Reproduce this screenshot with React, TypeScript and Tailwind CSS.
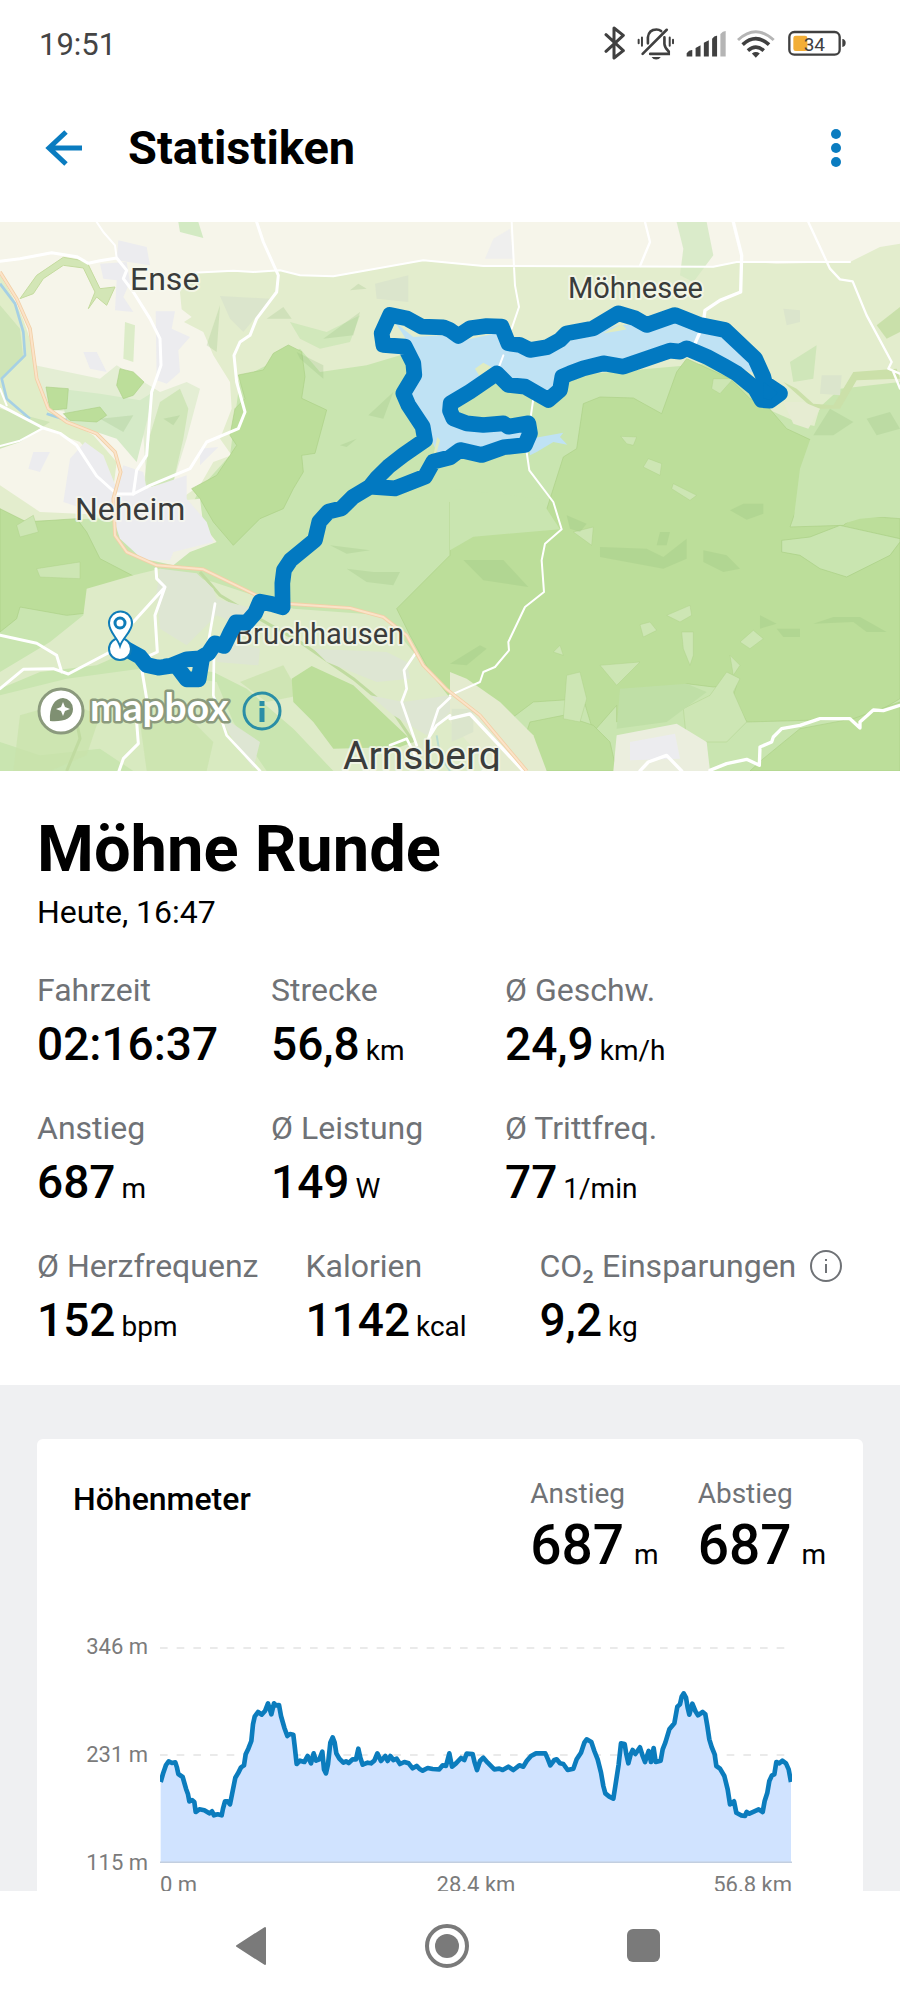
import type { ReactNode } from 'react';

type StatProps = {
  label: ReactNode;
  value: string;
  unit?: string;
};

// Elevation profile, 1896 x 648 units, 0 = 346 m, 648 = 115 m
const PROFILE =
  '2,405 10,377 18,354 26,343 36,348 46,346 51,362 55,381 68,390 78,425 84,442 88,463 96,459 103,465 107,495 118,487 133,490 148,499 156,493 162,505 173,502 185,505 189,485 195,463 203,463 210,472 216,442 226,392 234,379 243,361 252,355 257,322 265,305 274,282 279,232 284,209 294,195 305,203 315,192 324,169 334,202 342,169 348,175 357,174 363,207 373,242 382,267 390,261 400,263 404,297 410,351 420,341 433,345 443,327 453,349 461,319 468,341 478,337 487,314 492,367 498,379 504,352 511,287 518,271 524,287 529,319 538,335 550,347 558,343 566,348 578,337 588,337 595,305 601,332 608,353 623,347 633,349 643,341 652,319 663,342 676,327 683,342 691,327 700,339 710,335 720,351 733,345 746,349 758,364 770,357 778,365 788,371 803,363 818,366 838,367 848,355 858,357 868,319 876,359 888,349 903,333 913,339 920,320 938,321 944,347 951,369 960,342 970,332 983,347 1003,367 1018,365 1028,369 1045,359 1060,369 1078,355 1090,359 1100,342 1113,327 1128,319 1156,319 1164,337 1171,355 1183,339 1190,337 1200,349 1210,351 1223,369 1240,365 1250,337 1263,317 1273,287 1280,277 1294,285 1303,312 1313,337 1323,377 1330,417 1336,439 1348,449 1360,455 1366,417 1376,352 1383,289 1394,291 1399,322 1405,349 1412,322 1418,309 1426,321 1440,301 1448,327 1455,345 1466,312 1473,345 1481,303 1487,345 1502,341 1508,307 1516,287 1528,247 1543,229 1552,179 1560,172 1565,149 1571,139 1578,152 1583,182 1588,203 1597,170 1606,192 1614,205 1628,195 1636,202 1642,237 1648,277 1655,300 1664,322 1669,357 1680,365 1693,387 1703,427 1710,472 1722,463 1729,497 1743,505 1755,507 1760,495 1768,500 1783,493 1796,487 1808,495 1814,462 1822,437 1828,402 1836,385 1843,382 1849,345 1858,349 1867,341 1878,349 1886,367 1893,405';

const ROUTE =
  'M375 1279 420 1304 440 1329 475 1337 510 1332 560 1312 600 1309 625 1294 645 1264 672 1272 690 1234 708 1201 740 1202 765 1174 780 1139 815 1146 848 1156 847 1084 852 1044 872 1014 945 954 958 899 985 869 1025 859 1060 824 1110 794 1130 769 1165 734 1210 699 1275 654 1268 614 1225 549 1210 514 1243 459 1240 424 1215 374 1150 369 1145 334 1170 279 1220 289 1265 314 1330 316 1350 324 1375 342 1410 319 1460 312 1505 314 1525 364 1560 369 1590 384 1640 376 1680 354 1700 334 1780 319 1855 274 1905 289 1940 309 2025 279 2100 309 2175 324 2265 409 2290 464 2295 484 2340 514 2310 536 2285 534 2265 499 2210 454 2175 434 2120 404 2060 379 2040 389 2010 386 1870 434 1810 424 1750 439 1710 454 1687 464 1680 504 1645 534 1575 494 1525 489 1490 454 1410 509 1352 544 1350 566 1360 589 1400 604 1450 609 1510 604 1525 614 1585 604 1590 634 1575 669 1510 676 1445 699 1380 684 1350 706 1300 719 1275 764 1185 799 1110 794M500 1332 530 1332 560 1372 596 1372 606 1310';

function Stat({ label, value, unit }: StatProps) {
  return (
    <div className="min-w-[187px]">
      <dt className="flex items-center text-[32px] leading-10 text-[#6f7276] whitespace-nowrap">{label}</dt>
      <dd className="mt-2 flex items-baseline gap-1.5 text-[46px] leading-[52px] font-medium text-black">
        {value}
        {unit && <span className="text-[28px] leading-8 font-normal">{unit}</span>}
      </dd>
    </div>
  );
}

function Climb({ label, value }: { label: string; value: string }) {
  return (
    <div>
      <dt className="text-[28px] leading-9 text-[#6f7276]">{label}</dt>
      <dd className="flex items-baseline gap-2.5 text-[55px] leading-[66px] font-medium text-black">
        {value}
        <span className="text-[28px] leading-8 font-normal">m</span>
      </dd>
    </div>
  );
}

function StatusBar() {
  return (
    <div className="flex h-[90px] items-center justify-between pl-[39px] pr-[54px]">
      <span className="text-[31px] leading-9 text-[#444]">19:51</span>
      <div className="flex items-center gap-[11px] pb-1 text-[#404040]">
        <svg className="h-[34px] w-[22px]" viewBox="130 78 66 102" fill="none" stroke="currentColor" strokeWidth="9" strokeLinecap="round" strokeLinejoin="round">
          <path d="M136 104 188 152 160 174V84L188 106 136 154" />
        </svg>
        <svg className="h-[34px] w-[38px]" viewBox="230 78 115 102" fill="none" stroke="currentColor" strokeWidth="8" strokeLinecap="round">
          <path d="M247 162 320 89M263 130V112C265 94 277 88 289 88Q297 88 303 93M313 112V132Q314 144 326 155V162H270" />
          <path d="M245 112V137M235 119V130M329 112V137M339 119V130" strokeWidth="6" />
          <path d="M274 171H302Q297 179 288 179T274 171" fill="currentColor" stroke="none" />
        </svg>
        <svg className="h-[34px] w-10" viewBox="377 78 121 102" fill="currentColor">
          <path d="M379 170V160Q387 149 396 150V170ZM406 170V144L421 136V170ZM431 170V128L446 121V170ZM456 170V116Q463 106 471 107V170Z" />
          <path d="M481 170V102Q488 93 497 93V170Z" fill="#b5b5b5" />
        </svg>
        <svg className="h-[34px] w-[38px]" viewBox="530 78 115 102" fill="none" stroke="currentColor" strokeWidth="11">
          <path d="M533 120Q587 70 641 120" stroke="#b5b5b5" strokeWidth="9" />
          <path d="M547 134Q587 98 627 134M563 152Q587 131 611 152" />
          <path d="M575 161Q587 152 599 161L587 174Z" fill="currentColor" stroke="none" />
        </svg>
        <svg className="ml-0.5 h-[34px] w-[58px]" viewBox="682 78 174 102">
          <rect x="686" y="96" width="151" height="68" rx="15" fill="none" stroke="currentColor" strokeWidth="7" />
          <rect x="698" y="107" width="42" height="46" rx="7" fill="#f2ae36" />
          <path d="M845 117Q855 118 855 129T845 141Z" fill="currentColor" />
          <text x="761" y="152" textAnchor="middle" fontSize="57" fill="currentColor">34</text>
        </svg>
      </div>
    </div>
  );
}

function Header() {
  return (
    <header className="flex h-[132px] items-center pl-[37px] pr-[37px] pb-4">
      <button type="button" aria-label="Zurück" className="mr-[37px] flex size-[54px] items-center justify-center text-[#0a7cc0]">
        <svg className="h-9 w-[38px]" viewBox="0 0 38 36" fill="none" stroke="currentColor" strokeWidth="5">
          <path d="M37 18H4M21 2 4 18 21 34" />
        </svg>
      </button>
      <h1 className="text-[47px] leading-[54px] font-bold text-black">Statistiken</h1>
      <button type="button" aria-label="Mehr" className="ml-auto flex size-[54px] items-center justify-center text-[#0a7cc0]">
        <svg className="h-10 w-3" viewBox="0 0 12 40" fill="currentColor">
          <circle cx="6" cy="6" r="5" />
          <circle cx="6" cy="20" r="5" />
          <circle cx="6" cy="34" r="5" />
        </svg>
      </button>
    </header>
  );
}

function Terrain() {
  return (
    <g transform="scale(0.33333)" strokeLinejoin="round">
      <path d="M0 0H2700V1647H0Z" fill="#c9e5b0" />

      {/* open fields */}
      <path d="M0 0H2700V480L2560 520 2480 620 2390 600 2300 560 2180 420 1600 470 1340 440 1200 400 1100 430 960 450 900 380 800 430 720 470 690 700 600 800 560 880 0 900Z" fill="#e3edcd" />
      <path d="M0 0H2700V65L2640 75 2550 120 2330 125 2210 118 2140 134 1450 132 1270 115 1000 163 900 160 840 145 760 150 700 146 580 152 540 210 545 262 575 285 552 300 610 330 640 400 690 480 695 560 660 650 695 700 640 720 600 790 500 860 340 880 120 870 0 790V650L60 620 120 590 60 520 0 440Z" fill="#f6f5ea" />
      <path d="M0 160Q90 300 105 430L140 560 280 640 350 720 340 800 310 740 240 660 130 620 0 560Z" fill="#e0edc8" />
      <path d="M0 250 60 320 70 410 0 470ZM0 560 150 600 60 660 0 680Z" fill="#cfe5b7" />
      <path d="M105 430 300 470 350 430 480 510 560 480 600 500 560 650 520 780 440 790 430 640 400 660 340 640 200 570 140 560Z" fill="#e4eed4" />
      <path d="M180 500 300 515 420 535 460 510 440 600 410 720 350 650 200 600Z" fill="#d5eac7" />
      <path d="M480 540 540 500 565 560 550 650 520 780 430 800 450 640Z" fill="#c7e2ae" opacity=".7" />
      <path d="M680 0H770L790 100 730 180 690 160 700 80Z" transform="translate(1350 0)" fill="#d3e9c2" opacity=".8" />
      <path d="M535 0H595L610 48 540 30Z" fill="#d3eac3" />
      <path d="M870 300 980 330 1080 280 1050 360 960 380 900 350Z" fill="#c9e5b4" opacity=".7" />
      <path d="M60 230 110 160 190 106 260 118 300 200 345 195 320 250 290 225 265 260 285 210 250 138 190 130 130 170 100 215Z" fill="#d3e6b6" stroke="#c5db9f" strokeWidth="3" />
      <path d="M375 300 405 310 400 420 370 410Z" fill="#dcecc8" />

      {/* forest */}
      <g fill="#bcde9a" stroke="#a9cf83" strokeWidth="3" strokeOpacity=".6">
        <path d="M715 459 790 444 820 394 865 369 905 389 915 464 905 529 980 564 945 694 905 700 910 750 880 800 850 860 780 890 700 970 640 900 600 830 575 800 650 760 690 700 710 670 690 640 705 560 735 530Z" />
        <path d="M360 440 400 450 432 480 400 520 370 530 350 490ZM138 495 205 500 200 560 150 565ZM190 575 300 555 320 580 290 600 210 595Z" />
        <path d="M0 860 80 900 230 890 260 930 300 1010 400 1062 290 1170 200 1180 60 1155 50 1190 0 1230Z" />
        <path d="M870 1365 935 1330 1060 1390 1240 1560 1200 1575 1000 1580 940 1500 880 1440Z" />
        <path d="M1190 1160 1350 1000 1350 840 1620 925 1690 705 1730 680 1750 545 1800 525 1900 528 1985 575 2030 450 2060 410 2190 470 2250 530 2300 550 2360 620 2435 655 2410 740 2400 830 2370 915 2530 910 2570 880 2700 890V1430L2600 1490 2240 1500 2200 1420 2210 1390 2140 1395 2060 1385 2000 1420 1850 1500 1850 1450 1780 1530 1750 1430 1600 1440 1520 1500 1440 1460 1350 1460 1230 1240Z" />
        <path d="M2700 1440 2560 1490 2400 1520 2290 1610 2250 1647H2700Z" />
        <path d="M1590 1500 1690 1480 1780 1510 1830 1560 1850 1647H1580L1560 1590Z" />
      </g>
      <path d="M1350 985 1420 944 1680 922 1620 830 1350 800Z" fill="#c9e5b0" />
      <path d="M2345 955 2430 945 2520 910 2700 950V960L2670 1000 2540 1065 2460 1040 2400 1000 2345 990Z" fill="#c9e5b0" stroke="#a9cf83" strokeWidth="2" />
      <path d="M2460 555 2520 500 2700 480V880L2580 890 2530 905 2380 900 2400 740 2435 640Z" fill="#c9e5b0" />
      <path d="M2350 480 2390 500 2440 545 2500 550 2560 450 2690 440 2700 470 2570 475 2520 560 2440 560Z" fill="#cbe0a9" />
      <path d="M2630 310 2700 255V330L2660 350Z" fill="#c9e0aa" />
      <path d="M2350 540 2410 540 2460 560 2425 620 2380 605Z" fill="#e6ecd2" />
      <path d="M2370 420 2450 370 2440 470 2380 480Z" fill="#cfe6b9" />

      {/* clearings and darker stands */}
      <g fill="#cde6b4" stroke="#acd087" strokeWidth="2" strokeOpacity=".6">
        <path d="M1862 643 1910 645 1900 670 1880 665ZM1945 710 1985 725 1980 760 1930 735ZM2020 785 2090 820 2070 835 2015 800Z" />
        <path d="M2140 470 2200 470 2160 515 2135 500ZM2000 1180 2070 1150 2075 1180 2040 1200ZM1920 1208 1950 1200 1970 1225 1930 1245Z" />
        <path d="M1800 1330 1920 1320 1850 1390ZM1700 1360 1740 1350 1760 1430 1740 1500 1690 1490ZM2045 1230 2080 1230 2080 1300 2070 1330 2050 1280Z" />
        <path d="M2220 1260 2260 1225 2290 1250 2250 1280ZM2190 1300 2220 1330 2200 1360ZM1720 930 1780 915 1775 970ZM1660 1290 1680 1270 1690 1300Z" />
        <path d="M2130 1420 2180 1350 2220 1370 2200 1410 2240 1500 2180 1560 2060 1560 2050 1460Z" />
        <path d="M50 910 100 880 115 930 60 945ZM110 1040 240 1020 240 1070 120 1065Z" />
      </g>
      <g fill="#8fbb78" opacity=".22">
        <path d="M1390 1014H1510L1585 1095 1450 1075ZM1800 975 1940 980 1990 1005 2060 950V1010L1990 1040 1800 1005ZM2110 985 2180 1000 2220 1040 2170 1050 2110 1020ZM2190 865 2230 845H2290V875L2240 893Z" />
        <path d="M2440 1205 2500 1185H2580L2660 1230H2600L2560 1200ZM1980 930H2010L2000 970H1970ZM1700 880 1760 905 1740 930 1710 920ZM2280 1180 2330 1205 2280 1220ZM2330 1220H2400V1245H2350Z" />
        <path d="M990 970 1110 985 1040 995ZM1040 1040 1120 1050 1200 1050 1180 1090 1100 1080ZM1105 580 1180 510 1150 590ZM1020 670 1070 650 1040 675ZM970 350 1080 270 1060 340ZM1050 205 1075 185 1100 200ZM890 390 970 430V470L900 410Z" />
        <path d="M800 290 850 255 875 290ZM2440 640 2490 560 2560 600 2500 640ZM620 370 660 250 650 390ZM30 1470 100 1440 80 1500ZM300 590 400 580 370 630ZM490 590 540 580 520 610Z" />
        <path d="M1350 1325 1440 1270 1460 1280 1400 1330ZM2600 590 2670 570 2700 620 2630 640Z" />
      </g>

      {/* light valleys around the river */}
      <path d="M260 1100 400 1060 480 1040 640 1080 760 1120 880 1160 1150 1180 1240 1290 1360 1440 1480 1540 1560 1647H1000L880 1520 740 1400 640 1350 520 1340 380 1290 290 1330 120 1350 0 1400V1350L150 1260 250 1180Z" fill="#deebc8" />
      <path d="M0 1420 200 1370 420 1340 650 1380 700 1500 800 1647H400L300 1580 120 1600 0 1560Z" fill="#d8eac0" />
      <path d="M60 1480 200 1440 300 1480 260 1600 150 1647H40ZM420 1500 560 1480 640 1560 620 1647H440ZM720 1380 850 1330 900 1420 800 1440Z" fill="#c9e3ab" opacity=".7" />
      <path d="M875 1370 935 1332 1060 1390 1240 1560 1200 1575 1000 1580 940 1500 880 1440Z" fill="#bcde9a" />
      <path d="M220 1450 240 1550 200 1647M600 1050 660 1120 760 1180 900 1260 1060 1370 1180 1470 1240 1560" fill="none" stroke="#c0dba0" strokeWidth="9" />
      <path d="M1350 1350 1400 1370 1500 1440 1600 1540 1640 1647H1480L1350 1500Z" fill="#e4ebcf" />
      <path d="M1850 1540 2030 1505 2120 1560 2130 1647H1840Z" fill="#ebeede" />
      <path d="M360 870 500 840 600 830 610 910 650 960 570 990 520 1030 430 1010Z" fill="#f0f1e2" />
      <path d="M1860 1400 2060 1385 2120 1410 2000 1500 1850 1520Z" fill="#bfdfa6" />

      {/* settlements */}
      <g fill="#ececef">
        <path d="M355 55 440 75 450 130 350 115ZM300 125 380 120 390 180 370 225 400 270 345 265 350 175 310 170ZM467 268 525 268 515 320 570 345 535 385 540 450 500 485 470 475Z" />
        <path d="M250 390 290 390 320 450 270 440ZM190 840 210 710 255 660 310 700 350 800 370 730 430 750 440 800 560 760 560 830 620 900 640 960 520 990 510 1014 430 1015 360 950 340 890Z" />
        <path d="M1890 1560 2025 1535 2040 1610 1890 1615ZM85 740 100 690 150 690 120 750ZM600 680 655 675 600 730Z" />
        <path d="M1455 110 1480 50 1530 20 1540 110Z" opacity=".7" />
      </g>
      <path d="M480 1040 590 1054 640 1100 650 1130 760 1160 720 1210 650 1180 560 1270 480 1220 470 1110ZM650 1250 780 1280 775 1330 650 1320ZM940 1280 1160 1290 1220 1320 1230 1370 1130 1380 980 1320ZM660 1480 780 1560 760 1640 690 1540ZM1110 1420 1210 1440 1350 1420 1350 1470 1280 1540 1180 1480Z" fill="#dee6d3" />
      <path d="M660 222 810 230 780 270 730 330 690 290ZM1125 185 1225 160V240L1130 230ZM1355 1460H1420V1530L1355 1560ZM2465 460 2525 460 2520 520 2460 515ZM2350 260 2400 265V300L2360 310Z" fill="#dbe5cc" />

      {/* river and lake */}
      <path d="M0 185 45 245 70 330 75 400 5 470 20 530 90 590M140 575 200 595" fill="none" stroke="#a6d0e4" strokeWidth="8" />
      <path d="M1310 1540 1320 1600 1350 1647" fill="none" stroke="#b9dcd0" strokeWidth="6" />
      <path d="M1185 300 1240 345 1330 340 1370 360 1505 330 1530 380 1600 400 1700 360 1855 310 2040 300 2160 330 2280 460 2060 380 1860 440 1690 470 1640 530 1520 490 1490 450 1350 540 1350 580 1590 620 1590 690 1350 705 1310 690 1280 620 1230 535 1260 440 1230 370Z" fill="#bfe2f4" />
      <path d="M1590 650 1690 632 1680 645 1702 668 1660 660 1610 690 1590 700Z" fill="#bfe2f4" />
      <path d="M1425 440 1450 422 1475 436 1440 465ZM1810 334 1865 306 1880 322 1850 328ZM1300 700 1312 645 1320 655 1310 690Z" fill="#e0ecc0" />

      {/* roads */}
      <g fill="none" stroke="#fff" strokeLinecap="round">
        <path d="M0 118 60 110 155 92 230 104 265 124 300 116 350 108 380 145 370 170 400 210 450 290 480 350 483 430 455 510 440 700 410 745 400 816H350L290 762 230 670 180 634 130 618 0 550" strokeWidth="9" />
        <path d="M770 0 790 60 835 160 830 210 770 290 750 340 720 360 702 400 710 480 735 570 715 620 620 660 570 740 450 790 400 816" strokeWidth="9" />
        <path d="M290 0 310 30 345 70 350 108M0 672 60 656 130 618M0 500 20 550M580 152 700 146 760 150 840 145 900 160 1000 163 1270 115 1450 132 2140 134 2210 120 2550 120M1535 0 1545 190 1557 255 1535 320M1510 400 1495 440M1600 530 1590 600M1580 690 1588 745 1660 840 1685 922 1635 965 1625 1015 1632 1110 1575 1155 1525 1260 1527 1285 1485 1335 1450 1350 1440 1380 1350 1420" strokeWidth="6" />
        <path d="M1935 0 1950 60 1920 132M2425 0 2490 140 2520 172 2558 178 2600 280 2675 420 2665 440 2700 455M2680 450 2700 500" strokeWidth="7" />
        <path d="M2200 0 2225 100 2222 210 2160 235 2115 265 2110 300M2100 330 2085 365" strokeWidth="10" />
        <path d="M468 1040 470 1070 495 1095 465 1180 472 1290 450 1300M495 1095 400 1200M0 1240 110 1264 170 1300 185 1350M0 1400 70 1342 160 1340 205 1356 330 1290M425 1340 440 1430 410 1500 415 1565 370 1610 357 1647" strokeWidth="9" />
        <path d="M645 1145 620 1290M642 1300 640 1420 680 1540 780 1647M1245 1296 1212 1345 1220 1400 1205 1440 1250 1570M1350 1427 1315 1460 1285 1550 1310 1510 1350 1480M1170 1570 1220 1550 1250 1610" strokeWidth="8" />
        <path d="M2700 1450 2650 1466 2620 1464 2580 1500 2580 1518 2550 1490H2460L2400 1510 2345 1520 2320 1545 2315 1560 2280 1575 2278 1630 2240 1612 2180 1625 2130 1645M1920 1647 1945 1620 2000 1600 2045 1647M1350 1490 1410 1476 1570 1647" strokeWidth="10" />
      </g>
      <path d="M0 150 50 230 90 320 110 470 145 560 200 600 290 635 345 690 362 750 340 830 345 940 380 990 470 1030 610 1042 770 1120 860 1145 1050 1158 1150 1185 1220 1240 1270 1330 1340 1402 1440 1480 1580 1647" fill="none" stroke="#f2cfa6" strokeWidth="11" />
      <path d="M0 150 50 230 90 320 110 470 145 560 200 600 290 635 345 690 362 750 340 830 345 940 380 990 470 1030 610 1042 770 1120 860 1145 1050 1158 1150 1185 1220 1240 1270 1330 1340 1402 1440 1480 1580 1647" fill="none" stroke="#fbe3c8" strokeWidth="6" />
    </g>
  );
}

function RouteMap() {
  return (
    <div className="relative h-[549px] overflow-hidden">
      <svg className="h-full w-full" viewBox="0 0 900 549" preserveAspectRatio="xMidYMid slice" role="img" aria-label="Karte der Runde">
        <Terrain />
        <g fill="#3a3c3b" stroke="#f7f8ef" strokeOpacity=".75" strokeWidth="4" strokeLinejoin="round" paintOrder="stroke">
          <text x="130" y="68" fontSize="32">Ense</text>
          <text x="568" y="76" fontSize="29">Möhnesee</text>
          <text x="75" y="298" fontSize="32">Neheim</text>
          <text x="235" y="422" fontSize="29">Bruchhausen</text>
          <text x="343" y="547" fontSize="39">Arnsberg</text>
        </g>
        <path d={ROUTE} transform="scale(0.33333)" fill="none" stroke="#0279c1" strokeWidth="47" strokeLinecap="round" strokeLinejoin="round" />
        <path d="M764 160 778 171 770 178 763 176Z" fill="#0279c1" />
        <g fill="#fff" stroke="#0f7cb8" strokeWidth="2">
          <circle cx="120" cy="427" r="11" />
          <path d="M120 424C117 415 109 410 109 401A11 11 0 0 1 132 401C132 410 123 415 120 424Z" />
          <circle cx="120" cy="401" r="5" strokeWidth="3" />
        </g>
      </svg>

      <a href="#mapbox" aria-label="Mapbox" className="absolute bottom-[34px] left-9">
        <svg className="h-[52px] w-[196px] overflow-visible" viewBox="0 0 196 52">
          <circle cx="25" cy="26" r="22" fill="#fff" stroke="#8b9a7d" strokeWidth="3" />
          <path d="M14 36C13 22 19 13 27 13A11 11 0 0 1 37 24C37 34 27 37 14 36Z" fill="#7f9072" />
          <path d="M27 17 29 22 34 24 29 26 27 31 25 26 20 24 25 22Z" fill="#fff" />
          <text x="54" y="36" fontSize="39" fontFamily="Lato, sans-serif" fontWeight="700" fill="#fff" stroke="#8b9a7d" strokeWidth="5" strokeLinejoin="round" paintOrder="stroke">
            mapbox
          </text>
        </svg>
      </a>
      <button type="button" aria-label="Kartenhinweise" className="absolute bottom-[39px] left-[242px]">
        <svg className="size-[41px]" viewBox="0 0 41 41" fill="none" stroke="#2a8ea6" strokeWidth="3">
          <circle cx="20" cy="20" r="18" />
          <path d="M20 17V31M20 10V15" strokeWidth="5" />
        </svg>
      </button>
    </div>
  );
}

function ElevationCard() {
  return (
    <section className="rounded-md bg-white px-9 pt-9 pb-9">
      <div className="flex justify-between">
        <h3 className="text-[32px] leading-[48px] font-medium text-black">Höhenmeter</h3>
        <dl className="flex gap-[39px] pt-px pr-px">
          <Climb label="Anstieg" value="687" />
          <Climb label="Abstieg" value="687" />
        </dl>
      </div>

      <div className="mt-[57px] pr-[35px] text-[22px] text-[#7b7b7b]">
        <div className="flex h-60 gap-3">
          <div className="flex w-[75px] flex-col justify-between text-right leading-6">
            <span>346 m</span>
            <span>231 m</span>
            <span>115 m</span>
          </div>
          <svg className="my-3 h-[216px] min-w-0 flex-1" viewBox="0 0 1896 648" preserveAspectRatio="none">
            <path d="M0 3H1896M0 324H1896" stroke="#e4e4e4" strokeWidth="4" strokeDasharray="23 27" />
            <path d={`M2 648 L${PROFILE} V648Z`} fill="#d0e3ff" />
            <path d="M0 646H1896" stroke="#c3cfe0" strokeWidth="5" />
            <polyline points={PROFILE} fill="none" stroke="#0b7cbd" strokeWidth="14" strokeLinejoin="round" />
          </svg>
        </div>
        <div className="grid grid-cols-3 pl-[87px] leading-5">
          <span>0 m</span>
          <span className="text-center">28.4 km</span>
          <span className="text-right">56.8 km</span>
        </div>
      </div>
    </section>
  );
}

function SystemNav() {
  return (
    <nav className="flex h-[109px] shrink-0 items-center justify-center bg-white pr-1.5 text-[#7a7a7a]">
      <button type="button" aria-label="Zurück" className="flex w-[196px] justify-center">
        <svg className="h-10 w-8" viewBox="0 0 32 40" fill="currentColor" stroke="currentColor" strokeWidth="2" strokeLinejoin="round">
          <path d="M2 20 30 2V38Z" />
        </svg>
      </button>
      <button type="button" aria-label="Startbildschirm" className="flex w-[196px] justify-center">
        <svg className="size-[46px]" viewBox="0 0 46 46">
          <circle cx="23" cy="23" r="20" fill="none" stroke="currentColor" strokeWidth="4" />
          <circle cx="23" cy="23" r="12" fill="currentColor" />
        </svg>
      </button>
      <button type="button" aria-label="Letzte Apps" className="flex w-[196px] justify-center">
        <span className="size-[33px] rounded-md bg-[#7a7a7a]" />
      </button>
    </nav>
  );
}

export default function App() {
  return (
    <div className="flex h-screen flex-col bg-white font-['Roboto',sans-serif]">
      <StatusBar />
      <Header />

      <main className="min-h-0 flex-1 overflow-y-auto bg-[#eff0f2] [scrollbar-width:none]">
        <RouteMap />

        <section className="bg-white px-[37px] pt-[38px] pb-[39px]">
          <h2 className="text-[65px] leading-[80px] font-bold text-black">Möhne Runde</h2>
          <p className="text-[32px] leading-[46px] text-black">Heute, 16:47</p>

          <div className="mt-[35px] flex flex-col gap-[38px]">
            <dl className="flex gap-[47px]">
              <Stat label="Fahrzeit" value="02:16:37" />
              <Stat label="Strecke" value="56,8" unit="km" />
              <Stat label="Ø Geschw." value="24,9" unit="km/h" />
            </dl>
            <dl className="flex gap-[47px]">
              <Stat label="Anstieg" value="687" unit="m" />
              <Stat label="Ø Leistung" value="149" unit="W" />
              <Stat label="Ø Trittfreq." value="77" unit="1/min" />
            </dl>
            <dl className="flex gap-[47px]">
              <Stat label="Ø Herzfrequenz" value="152" unit="bpm" />
              <Stat label="Kalorien" value="1142" unit="kcal" />
              <Stat
                label={
                  <>
                    <span>CO₂ Einsparungen</span>
                    <button type="button" aria-label="Info" className="ml-3.5">
                      <svg className="size-8" viewBox="0 0 32 32" fill="none" stroke="currentColor" strokeWidth="2">
                        <circle cx="16" cy="16" r="15" />
                        <path d="M16 14V23M16 9V11" />
                      </svg>
                    </button>
                  </>
                }
                value="9,2"
                unit="kg"
              />
            </dl>
          </div>
        </section>

        <div className="px-[37px] pt-[54px] pb-10">
          <ElevationCard />
        </div>
      </main>

      <SystemNav />
    </div>
  );
}
